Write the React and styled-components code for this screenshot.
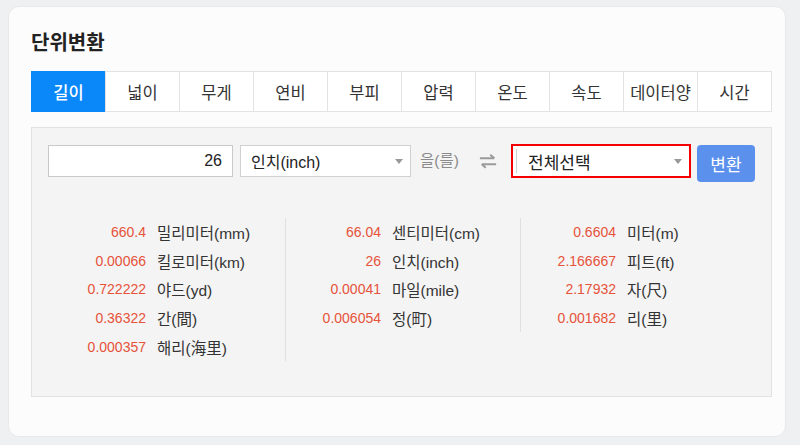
import React, { useState } from "react";
import styled, { createGlobalStyle } from "styled-components";

const tabs = ["길이", "넓이", "무게", "연비", "부피", "압력", "온도", "속도", "데이터양", "시간"];

const columns = [
  [
    ["660.4", "밀리미터(mm)"],
    ["0.00066", "킬로미터(km)"],
    ["0.722222", "야드(yd)"],
    ["0.36322", "간(間)"],
    ["0.000357", "해리(海里)"],
  ],
  [
    ["66.04", "센티미터(cm)"],
    ["26", "인치(inch)"],
    ["0.00041", "마일(mile)"],
    ["0.006054", "정(町)"],
  ],
  [
    ["0.6604", "미터(m)"],
    ["2.166667", "피트(ft)"],
    ["2.17932", "자(尺)"],
    ["0.001682", "리(里)"],
  ],
];

export default function App() {
  const [active, setActive] = useState(0);
  const [value, setValue] = useState("26");

  return (
    <>
      <GlobalStyle />
      <Card>
        <Title>단위변환</Title>
        <TabBar>
          {tabs.map((t, i) => (
            <Tab key={t} $active={i === active} onClick={() => setActive(i)}>
              {t}
            </Tab>
          ))}
        </TabBar>
        <Panel>
          <Controls>
            <NumberInput value={value} onChange={(e) => setValue(e.target.value)} />
            <SelectBox>
              인치(inch)
              <Caret />
            </SelectBox>
            <Josa>을(를)</Josa>
            <SwapIcon viewBox="0 0 20 16">
              <path d="M1 5h16M12.5 1l4.5 4" stroke="#9a9a9a" strokeWidth="2.2" fill="none" />
              <path d="M19 11.5h-16M7.5 15.5l-4.5-4" stroke="#9a9a9a" strokeWidth="2.2" fill="none" />
            </SwapIcon>
            <TargetSelect>
              <InnerLine />
              전체선택
              <Caret />
            </TargetSelect>
            <ConvertButton>변환</ConvertButton>
          </Controls>
          <Results>
            {columns.map((col, ci) => (
              <Column key={ci} $last={ci === columns.length - 1}>
                {col.map(([v, label]) => (
                  <Row key={label}>
                    <Value>{v}</Value>
                    <Label>{label}</Label>
                  </Row>
                ))}
              </Column>
            ))}
          </Results>
        </Panel>
      </Card>
    </>
  );
}

const GlobalStyle = createGlobalStyle`
  body {
    margin: 0;
    background: #eff0f2;
    font-family: "Liberation Sans", "Noto Sans CJK KR", sans-serif;
    color: #333;
  }
`;

const Card = styled.div`
  box-sizing: border-box;
  width: 778px;
  height: 431px;
  margin: 6px 0 0 8px;
  padding: 0 22px;
  background: #fcfcfc;
  border: 1px solid #e8e9eb;
  border-radius: 11px;
`;

const Title = styled.h1`
  margin: 0;
  padding-top: 20px;
  height: 44px;
  font-size: 20px;
  font-weight: 700;
  line-height: 30px;
  color: #222;
  font-family: "Noto Sans CJK KR", sans-serif;
`;

const TabBar = styled.div`
  display: flex;
  width: 741px;
`;

const Tab = styled.div`
  box-sizing: border-box;
  width: 75px;
  height: 41px;
  display: flex;
  align-items: center;
  justify-content: center;
  font-size: 16.5px;
  font-family: "Noto Sans CJK KR", sans-serif;
  cursor: pointer;
  border: 1px solid ${(p) => (p.$active ? "#0a87f8" : "#e3e3e3")};
  margin-left: -1px;
  &:first-child {
    margin-left: 0;
  }
  background: ${(p) => (p.$active ? "#0a87f8" : "#fff")};
  color: ${(p) => (p.$active ? "#fff" : "#333")};
  font-weight: ${(p) => (p.$active ? 500 : 400)};
`;

const Panel = styled.div`
  box-sizing: border-box;
  width: 741px;
  height: 270px;
  margin-top: 15px;
  padding: 17px 16px 0;
  background: #f4f4f4;
  border: 1px solid #e2e2e2;
`;

const Controls = styled.div`
  display: flex;
  align-items: flex-start;
  white-space: nowrap;
  & > * {
    flex-shrink: 0;
  }
`;

const NumberInput = styled.input`
  box-sizing: border-box;
  width: 185px;
  height: 32px;
  border: 1px solid #c9c9c9;
  background: #fff;
  text-align: right;
  padding: 0 10px;
  font-size: 16px;
  font-family: "Liberation Sans", sans-serif;
  color: #222;
  outline: none;
`;

const SelectBox = styled.div`
  position: relative;
  box-sizing: border-box;
  width: 171px;
  height: 32px;
  margin-left: 7px;
  padding-left: 10px;
  display: flex;
  align-items: center;
  background: #fff;
  border: 1px solid #d0d0d0;
  font-size: 16px;
  color: #222;
`;

const Caret = styled.span`
  position: absolute;
  right: 7px;
  top: 50%;
  margin-top: -2px;
  width: 0;
  height: 0;
  border-left: 4px solid transparent;
  border-right: 4px solid transparent;
  border-top: 5px solid #999;
`;

const Josa = styled.span`
  width: 43px;
  margin-left: 9px;
  line-height: 32px;
  font-size: 15.5px;
  color: #8a8a8a;
`;

const SwapIcon = styled.svg`
  width: 18px;
  height: 16px;
  margin: 8px 0 0 16px;
`;

const TargetSelect = styled.div`
  position: relative;
  box-sizing: border-box;
  width: 180px;
  height: 34px;
  margin: -1px 0 0 14px;
  padding-left: 15px;
  display: flex;
  align-items: center;
  background: #fff;
  border: 2px solid #f40000;
  font-size: 17px;
  color: #222;
  font-family: "Noto Sans CJK KR", sans-serif;
`;

const InnerLine = styled.span`
  position: absolute;
  left: 3px;
  top: 3px;
  bottom: 3px;
  width: 1px;
  background: #cfcfcf;
`;

const ConvertButton = styled.button`
  width: 58px;
  height: 37px;
  margin-left: 6px;
  border: none;
  border-radius: 4px;
  background: #5b90ec;
  color: #fff;
  font-size: 17px;
  font-family: "Noto Sans CJK KR", sans-serif;
  cursor: pointer;
`;

const Results = styled.div`
  display: grid;
  grid-template-columns: 235px 235px 235px;
  align-items: start;
  margin: 36px 0 0 3px;
`;

const Column = styled.div`
  border-right: ${(p) => (p.$last ? "none" : "1px solid #e0e0e0")};
`;

const Row = styled.div`
  display: flex;
  align-items: center;
  height: 28.6px;
`;

const Value = styled.span`
  width: 95px;
  text-align: right;
  font-size: 14px;
  color: #e6523a;
`;

const Label = styled.span`
  margin-left: 11px;
  font-size: 15.5px;
  color: #333;
`;
